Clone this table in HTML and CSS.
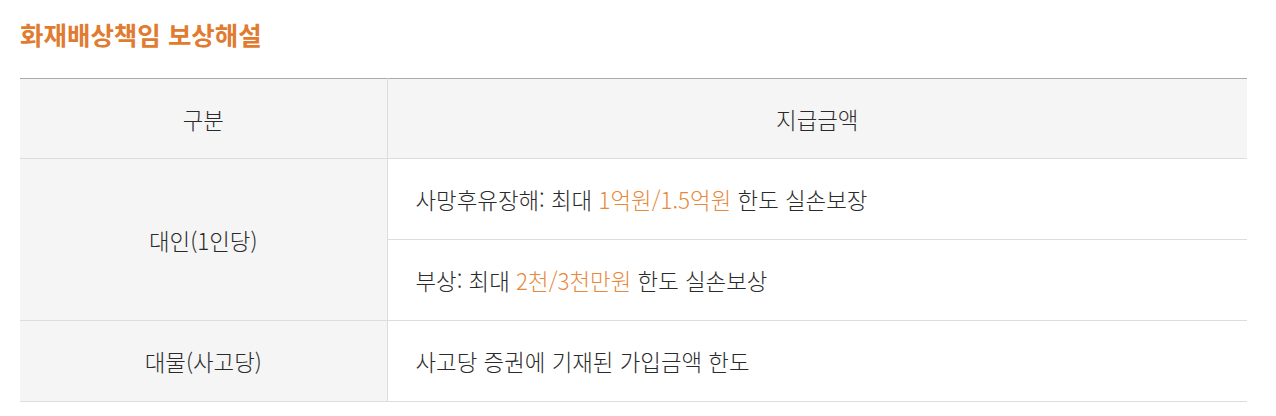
FILE: index.html
```html
<!DOCTYPE html>
<html lang="ko">
<head>
<meta charset="utf-8">
<link rel="stylesheet" href="styles.css">
</head>
<body>
<div class="wrap">
  <h2 class="title">화재배상책임 보상해설</h2>
  <table class="tbl">
    <colgroup><col class="c1"><col class="c2"></colgroup>
    <thead>
      <tr><th>구분</th><th>지급금액</th></tr>
    </thead>
    <tbody>
      <tr>
        <th rowspan="2">대인(1인당)</th>
        <td>사망후유장해: 최대 <span class="hl">1억원/1.5억원</span> 한도 실손보장</td>
      </tr>
      <tr>
        <td>부상: 최대 <span class="hl">2천/3천만원</span> 한도 실손보상</td>
      </tr>
      <tr>
        <th>대물(사고당)</th>
        <td>사고당 증권에 기재된 가입금액 한도</td>
      </tr>
    </tbody>
  </table>
</div>
</body>
</html>
```

FILE: styles.css
```css
* { box-sizing: border-box; }
html, body { margin: 0; padding: 0; background: #fff; }
body {
  font-family: "Noto Sans CJK KR", "Noto Sans", sans-serif;
  color: #333;
}
.wrap { padding: 16px 29px 0 20px; }
.title {
  margin: 0 0 26px;
  font-size: 25.5px;
  line-height: 36px;
  font-weight: 700;
  color: #e07b30;
}
.tbl {
  width: 100%;
  border-collapse: collapse;
  border-top: 1px solid #aaa;
  font-size: 22.4px;
  font-weight: 300;
}
.c1 { width: 367px; }
.tbl th, .tbl td {
  height: 81px;
  border-bottom: 1px solid #ddd;
  font-weight: 300;
  padding: 0;
  vertical-align: middle;
  color: #2a2a2a;
}
.tbl thead th { background: #f5f5f5; text-align: center; height: 80px; }
.tbl thead th:first-child { border-right: 1px solid #ddd; }
.tbl tbody th {
  background: #f5f5f5;
  text-align: center;
  border-right: 1px solid #ddd;
}
.tbl td { padding-left: 28px; text-align: left; }
.hl { color: #e8883a; }
```
